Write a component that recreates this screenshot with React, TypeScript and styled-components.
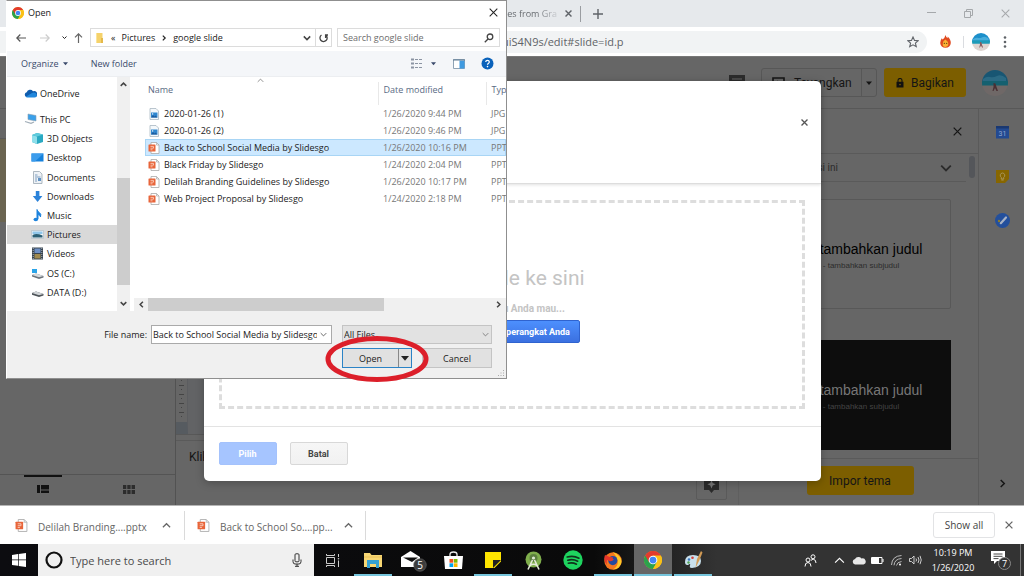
import React from 'react';
import styled, { createGlobalStyle } from 'styled-components';

const UI = '"Open Sans", "Noto Sans", sans-serif';
const PRODUCT = 'Roboto, "Liberation Sans", sans-serif';
const DOC = '"Liberation Sans", sans-serif';

const Global = createGlobalStyle`
  *, *::before, *::after { box-sizing: border-box; }
  html, body { margin: 0; padding: 0; }
  body { font-family: ${UI}; background: #fff; overflow-x: hidden; }
  button, input, select { font: inherit; color: inherit; margin: 0; }
  button { background: none; border: 0; padding: 0; cursor: pointer; }
  svg { display: block; flex: none; }
`;

const Screen = styled.div`
  position: relative;
  display: flex;
  flex-direction: column;
  min-height: 100vh;
`;

/* ---------- Browser chrome ---------- */

const TabStrip = styled.header`
  display: flex;
  align-items: center;
  height: 27px;
  background: #e6e9ec;
  color: #5f6368;
`;
const Tab = styled.div`
  display: flex;
  align-items: center;
  justify-content: flex-end;
  gap: 6px;
  width: 581px;
  height: 16px;
  padding-right: 7px;
  border-right: 1px solid #9a9da1;
  font-size: 9px;
  line-height: 16px;
`;
const TabTitle = styled.span`
  background: linear-gradient(90deg, #5f6368 60%, #c9ccd0);
  background-clip: text;
  color: transparent;
`;
const IconButton = styled.button<{ $w?: number; $h?: number }>`
  display: flex;
  align-items: center;
  justify-content: center;
  flex: none;
  width: ${(p) => p.$w ?? 16}px;
  height: ${(p) => p.$h ?? 16}px;
`;
const WindowControls = styled.div`
  display: flex;
  margin-left: auto;
  color: #a5a8ab;
`;
const UrlRow = styled.div`
  display: flex;
  align-items: center;
  height: 29px;
  padding-right: 4px;
  background: #fff;
`;
const Omnibox = styled.div`
  display: flex;
  align-items: center;
  flex: 1;
  height: 22px;
  padding-right: 6px;
  background: #f1f3f4;
  border-radius: 0 11px 11px 0;
`;
const UrlInput = styled.input`
  flex: 1;
  min-width: 0;
  height: 20px;
  padding: 0 0 0 502px;
  border: 0;
  background: transparent;
  color: #5f6368;
  font-size: 11px;
`;
const Extensions = styled.div`
  display: flex;
  align-items: center;
  color: #5f6368;
`;
const ExtensionRule = styled.span`
  width: 1px;
  height: 12px;
  margin-right: 8px;
  background: #dadce0;
`;

/* ---------- Presentation editor ---------- */

const Editor = styled.main`
  position: relative;
  display: flex;
  flex-direction: column;
  flex: 1;
  min-height: 449px;
  background: #666;
  border-top: 1px solid #777;
  font-family: ${PRODUCT};
  color: #151515;
`;
const EditorHeader = styled.div`
  display: flex;
  align-items: center;
  justify-content: flex-end;
  height: 52px;
  padding-right: 16px;
  border-bottom: 1px solid #585858;
`;
const PresentGroup = styled.div`
  display: flex;
  height: 29px;
  margin: 0 7px 0 16px;
  border: 1px solid #575757;
  border-radius: 3px;
`;
const PresentButton = styled.button`
  display: flex;
  align-items: center;
  gap: 9px;
  width: 99px;
  padding-left: 10px;
  font-size: 12px;
`;
const PresentMore = styled(IconButton)`
  height: 100%;
  border-left: 1px solid #575757;
`;
const YellowButton = styled.button<{ $w: number }>`
  display: flex;
  align-items: center;
  justify-content: center;
  gap: 7px;
  width: ${(p) => p.$w}px;
  height: 29px;
  border-radius: 3px;
  background: #7c5e00;
  font-size: 12px;
`;
const Account = styled.button`
  display: flex;
  margin-left: 16px;
`;
const Workspace = styled.div`
  display: flex;
  flex: 1;
`;
const Filmstrip = styled.aside`
  display: flex;
  flex-direction: column;
  justify-content: space-between;
  width: 176px;
  border-right: 1px solid #525252;
`;
const SelectedSlide = styled.div`
  height: 84px;
  margin-top: 29px;
  border-top: 1px solid #5a5a5a;
  background: #6a6450;
`;
const ViewTabs = styled.div`
  display: flex;
  height: 31px;
  padding-right: 3px;
  border-top: 1px solid #545454;
`;
const ViewTab = styled.button<{ $active?: boolean }>`
  display: flex;
  flex: 1;
  flex-direction: column;
  align-items: center;
  gap: 8px;
  &::before {
    content: '';
    width: 38px;
    height: 2px;
    background: ${(p) => (p.$active ? '#111' : 'transparent')};
  }
`;
const Stage = styled.section`
  display: flex;
  flex-direction: column;
  flex: 1;
`;
const Canvas = styled.div`
  display: flex;
  flex: 1;
  background: #626365;
  border-bottom: 1px solid #585858;
`;
const Ruler = styled.div`
  display: flex;
  align-items: flex-end;
  width: 12px;
  border-right: 1px solid #5c5d60;
  background: #666;
  border-bottom: 12px solid #565b60;
`;
const Notes = styled.div`
  display: flex;
  justify-content: space-between;
  height: 65px;
  padding: 0 11px 0 13px;
  border-top: 1px solid #5a5a5a;
  background: #666;
  font-size: 12px;
  line-height: 32px;
`;
const NotesHandle = styled.div`
  height: 5px;
  background: #666;
`;
const ExploreButton = styled.button`
  display: flex;
  align-items: center;
  justify-content: center;
  align-self: flex-end;
  width: 31px;
  height: 29px;
  margin-bottom: 5px;
  border: 1px solid #5a5a5a;
  border-radius: 2px;
`;
const ThemePanel = styled.aside`
  display: flex;
  flex-direction: column;
  width: 241px;
  border-left: 1px solid #5f5f5f;
  border-right: 1px solid #5a5a5a;
`;
const ThemeHeader = styled.div`
  display: flex;
  align-items: center;
  justify-content: space-between;
  height: 45px;
  padding: 0 13px 0 18px;
  border-bottom: 1px solid #5a5a5a;
  font-size: 12px;
`;
const ThemeBody = styled.div`
  display: flex;
  flex: 1;
`;
const ThemeList = styled.div`
  display: flex;
  flex-direction: column;
  flex: 1;
`;
const ThemeSection = styled.button`
  display: flex;
  align-items: center;
  justify-content: space-between;
  height: 28px;
  padding: 0 14px 0 28px;
  border-bottom: 1px solid #5a5a5a;
  font-size: 10px;
  color: #2b2b2b;
`;
const PanelScroll = styled.div`
  width: 12px;
  padding: 2px 3px;
  &::before {
    content: '';
    display: block;
    height: 22px;
    border-radius: 3px;
    background: #54565a;
  }
`;
const ThemeCard = styled.button<{ $dark?: boolean }>`
  display: flex;
  flex-direction: column;
  align-items: center;
  justify-content: center;
  gap: 3px;
  height: 110px;
  margin: ${(p) => (p.$dark ? '31px 15px 0 13px' : '17px 15px 0 13px')};
  padding: 4px 0 0 4px;
  border: 1px solid ${(p) => (p.$dark ? '#0d0d0d' : '#585858')};
  border-radius: ${(p) => (p.$dark ? 0 : 2)}px;
  background: ${(p) => (p.$dark ? '#0d0d0d' : '#666')};
  color: ${(p) => (p.$dark ? '#777' : '#000')};
  font-family: ${DOC};
  white-space: nowrap;
`;
const CardTitle = styled.span`
  font-size: 14px;
  line-height: 16px;
`;
const CardSub = styled.span<{ $dark?: boolean }>`
  font-size: 8px;
  line-height: 12px;
  color: ${(p) => (p.$dark ? '#444' : '#2c2c2c')};
`;
const ThemeFooter = styled.div`
  display: flex;
  justify-content: center;
  height: 47px;
  padding: 7px 0 0 3px;
  border-top: 1px solid #5a5a5a;
`;
const SideRail = styled.nav`
  display: flex;
  flex-direction: column;
  align-items: center;
  gap: 28px;
  width: 45px;
  padding: 15px 0 0 2px;
`;
const RailToggle = styled(IconButton)`
  margin: auto 0 14px;
`;

/* ---------- File picker modal ---------- */

const ModalLayer = styled.div`
  position: absolute;
  inset: 0;
  display: flex;
  align-items: center;
  justify-content: center;
`;
const Modal = styled.section`
  display: flex;
  flex-direction: column;
  width: 617px;
  max-width: 100%;
  height: 400px;
  background: #fff;
  border-radius: 5px;
  box-shadow: 0 2px 8px rgba(0, 0, 0, 0.25);
`;
const ModalHeader = styled.div`
  display: flex;
  justify-content: flex-end;
  height: 103px;
  padding: 33px 8px 0 0;
  border-bottom: 1px solid #ddd;
  box-shadow: 0 1px 3px rgba(0, 0, 0, 0.12);
  color: #555;
`;
const DropZone = styled.div`
  display: flex;
  flex: 1;
  flex-direction: column;
  align-items: center;
  margin: 16px 16px 17px 15px;
  padding-top: 60px;
  border: 3px dashed #ddd;
  color: #c4c4c4;
`;
const DropTitle = styled.p`
  margin: 0;
  font-size: 21px;
  line-height: 30px;
`;
const DropHint = styled.p`
  margin: 9px 0 4px;
  font-size: 10px;
  line-height: 14px;
  font-weight: 700;
`;
const PickerButton = styled.button<{ $kind: 'primary' | 'disabled' | 'plain' }>`
  height: 23px;
  min-width: 58px;
  padding: 0 9px;
  border: 1px solid
    ${(p) => (p.$kind === 'primary' ? '#2f63cf' : p.$kind === 'disabled' ? '#a4c2fc' : '#d8d8d8')};
  border-radius: 2px;
  background: ${(p) =>
    p.$kind === 'primary'
      ? 'linear-gradient(#4d90fe, #3b70e0)'
      : p.$kind === 'disabled'
        ? '#a6c5ff'
        : 'linear-gradient(#f6f6f6, #f1f1f1)'};
  color: ${(p) => (p.$kind === 'plain' ? '#444' : '#fff')};
  font-size: 9px;
  font-weight: 700;
`;
const ModalFooter = styled.div`
  display: flex;
  gap: 13px;
  height: 55px;
  padding: 15px 15px 0;
  border-top: 1px solid #e3e3e3;
`;

/* ---------- Open file window ---------- */

const FileWindow = styled.section`
  position: absolute;
  left: 6px;
  top: 0;
  display: flex;
  flex-direction: column;
  width: 501px;
  height: 379px;
  border: 1px solid #8f8f8f;
  border-left-color: #fff;
  background: #fff;
  font-size: 9px;
  color: #222;
`;
const TitleBar = styled.div`
  display: flex;
  align-items: center;
  gap: 4px;
  height: 23px;
  padding: 0 5px;
`;
const TitleText = styled.h1`
  flex: 1;
  margin: 0;
  font-size: inherit;
  font-weight: 400;
`;
const NavBar = styled.div`
  display: flex;
  align-items: center;
  height: 27px;
  padding: 0 6px;
`;
const AddressBar = styled.div`
  display: flex;
  align-items: center;
  gap: 6px;
  flex: 1;
  height: 19px;
  margin: 0 5px 0 1px;
  padding-left: 3px;
  border: 1px solid #dcdcdc;
`;
const RefreshCell = styled.div`
  display: flex;
  align-items: center;
  height: 100%;
  margin-left: auto;
  color: #444;
`;
const RefreshButton = styled(IconButton)`
  height: 100%;
  border-left: 1px solid #dcdcdc;
`;
const SearchBox = styled.label`
  display: flex;
  align-items: center;
  width: 163px;
  height: 19px;
  padding: 0 5px 0 5px;
  border: 1px solid #dcdcdc;
  color: #444;
`;
const SearchInput = styled.input`
  flex: 1;
  min-width: 0;
  padding: 0;
  border: 0;
  outline: 0;
  background: transparent;
  font-size: 9px;
  &::placeholder {
    color: #6d6d6d;
    opacity: 1;
  }
`;
const CommandBar = styled.div`
  display: flex;
  align-items: center;
  height: 26px;
  padding: 0 9px 0 14px;
  background: #f4f6f9;
  border-bottom: 1px solid #eceef1;
  color: #3a4a6b;
`;
const Command = styled.button`
  display: flex;
  align-items: center;
  gap: 4px;
  margin-right: 23px;
`;
const CommandIcons = styled.div`
  display: flex;
  align-items: center;
  margin-left: auto;
`;
const Browser = styled.div`
  display: flex;
  height: 234px;
`;
const Tree = styled.nav`
  display: flex;
  flex-direction: column;
  width: 110px;
  padding-top: 7px;
`;
const TreeItem = styled.a<{ $root?: boolean; $selected?: boolean }>`
  display: flex;
  align-items: center;
  gap: 3px;
  height: 19px;
  padding-left: ${(p) => (p.$root ? 17 : 24)}px;
  margin-bottom: ${(p) => (p.$root ? 7 : 0)}px;
  background: ${(p) => (p.$selected ? '#d9d9d9' : 'transparent')};
  color: inherit;
  text-decoration: none;
  & + & {
    margin-bottom: 0;
  }
`;
const TreeGroup = styled.div`
  display: flex;
  flex-direction: column;
  height: 173px;
  & > a {
    flex: 1;
  }
`;
const VScroll = styled.div`
  display: flex;
  flex-direction: column;
  align-items: center;
  width: 13px;
  padding: 4px 0;
  background: #f0f0f0;
  color: #444;
`;
const VThumb = styled.div`
  width: 13px;
  height: 107px;
  margin: auto 0 15px;
  background: #cdcdcd;
`;
const FilePane = styled.div`
  display: flex;
  flex-direction: column;
  flex: 1;
  min-width: 0;
  margin-left: 4px;
  overflow: hidden;
`;
const SortMark = styled.div`
  display: flex;
  height: 5px;
  padding-left: 123px;
  color: #777;
`;
const FileTable = styled.table`
  width: 361px;
  margin-left: 11px;
  border-collapse: collapse;
  table-layout: fixed;
  white-space: nowrap;
`;
const HeadCell = styled.th<{ $w?: number }>`
  width: ${(p) => (p.$w ? `${p.$w}px` : 'auto')};
  height: 23px;
  padding: 0 0 7px ${(p) => (p.$w === 233 ? 3 : 5)}px;
  border-right: 1px solid #e8e8e8;
  color: #5a6b85;
  font-size: 9px;
  font-weight: 400;
  line-height: 16px;
  text-align: left;
  &:last-child {
    border: 0;
  }
`;
const FileRow = styled.tr<{ $selected?: boolean }>`
  background: ${(p) => (p.$selected ? '#cce8ff' : 'transparent')};
  box-shadow: ${(p) => (p.$selected ? 'inset 0 0 0 1px #a8d5f5' : 'none')};
`;
const FileCell = styled.td<{ $name?: boolean }>`
  height: 17px;
  padding: 0 0 0 ${(p) => (p.$name ? 3 : 5)}px;
  color: ${(p) => (p.$name ? '#222' : '#777')};
  font-size: 9px;
  line-height: 17px;
`;
const FileName = styled.span`
  display: flex;
  align-items: center;
  gap: 4px;
`;
const HScroll = styled.div`
  display: flex;
  align-items: center;
  height: 13px;
  margin-top: auto;
  padding: 0 4px;
  background: #f0f0f0;
  color: #444;
`;
const HThumb = styled.div`
  width: 236px;
  height: 13px;
  margin: 0 auto 0 3px;
  background: #cdcdcd;
`;
const OpenForm = styled.form`
  position: relative;
  display: flex;
  flex-direction: column;
  flex: 1;
  gap: 4px;
  padding: 14px 14px 0 0;
  background: #f0f0f0;
`;
const FormRow = styled.div`
  display: flex;
  align-items: center;
  justify-content: flex-end;
  gap: 10px;
`;
const FieldLabel = styled.label`
  margin-right: -6px;
`;
const NameBox = styled.div`
  display: flex;
  align-items: center;
  width: 181px;
  height: 19px;
  padding-right: 2px;
  border: 1px solid #aaa;
  background: #fff;
  color: #555;
`;
const NameInput = styled.input`
  flex: 1;
  min-width: 0;
  padding: 0 0 0 1px;
  border: 0;
  background: transparent;
  color: #222;
  font-size: 9px;
`;
const TypeBox = styled.div`
  display: grid;
  align-items: center;
  width: 150px;
  height: 19px;
  color: #777;
  & > * {
    grid-area: 1 / 1;
  }
  & > svg {
    justify-self: end;
    margin-right: 3px;
    pointer-events: none;
  }
`;
const TypeSelect = styled.select`
  width: 100%;
  height: 19px;
  padding: 0 1px;
  appearance: none;
  border: 1px solid #c4c4c4;
  border-radius: 0;
  background: #e2e2e2;
  color: #222;
`;
const SplitButton = styled.div`
  display: flex;
  width: 70px;
  height: 20px;
  border: 1px solid #2b83c6;
  background: #e1e1e1;
`;
const OpenButton = styled.button`
  flex: 1;
`;
const OpenMore = styled.button`
  display: flex;
  align-items: center;
  justify-content: center;
  width: 13px;
  border-left: 1px solid #888;
`;
const CancelButton = styled.button`
  width: 70px;
  height: 20px;
  border: 1px solid #c4c4c4;
  background: #e1e1e1;
`;
const Grip = styled.svg`
  position: absolute;
  right: 1px;
  bottom: 1px;
`;
const Highlight = styled.svg`
  position: absolute;
  left: 324px;
  top: 334px;
  pointer-events: none;
`;

/* ---------- Downloads shelf ---------- */

const Shelf = styled.div`
  display: flex;
  align-items: center;
  height: 39px;
  padding-right: 7px;
  border-top: 1px solid #b5b5b5;
  background: #fff;
  color: #666;
`;
const Download = styled.div`
  display: flex;
  align-items: center;
  gap: 10px;
  width: 181px;
  height: 29px;
  padding: 0 12px 0 12px;
  border-right: 1px solid #dadada;
  font-size: 10px;
  &:first-child {
    width: 185px;
    padding-left: 15px;
  }
`;
const DownloadName = styled.span`
  flex: 1;
  padding-top: 3px;
  white-space: nowrap;
`;
const ShowAll = styled.button`
  width: 62px;
  height: 26px;
  margin: 0 6px 0 auto;
  border: 1px solid #e2e3e5;
  border-radius: 3px;
  color: #444;
  font-size: 10px;
`;

/* ---------- Taskbar ---------- */

const Taskbar = styled.footer`
  display: flex;
  height: 32px;
  background: linear-gradient(90deg, #0c0c10, #0a0a0a 58%, #333 70%, #333);
  color: #fff;
`;
const StartButton = styled(IconButton)`
  width: 38px;
  height: 32px;
`;
const TaskSearch = styled.label`
  display: flex;
  align-items: center;
  gap: 7px;
  width: 276px;
  padding: 0 12px 0 7px;
  background: #f0f0f0;
  color: #444;
`;
const TaskSearchInput = styled(SearchInput)`
  font-size: 11px;
  &::placeholder {
    color: #4a4a4a;
  }
`;
const TaskButton = styled.button<{ $open?: boolean; $active?: boolean }>`
  display: flex;
  align-items: center;
  justify-content: center;
  width: 38px;
  height: 32px;
  margin: 0 1px;
  background: ${(p) => (p.$active ? '#666' : 'transparent')};
  box-shadow: ${(p) => (p.$open ? 'inset 0 -2px 0 #76c5dc' : 'none')};
`;
const TaskGroup = styled.div`
  display: flex;
  margin-left: -1px;
`;
const Tray = styled.div`
  display: flex;
  align-items: center;
  margin-left: auto;
  padding-right: 3px;
`;
const Clock = styled.time`
  width: 56px;
  margin: 0 10px 0 0;
  font-size: 9px;
  line-height: 15px;
  text-align: center;
`;
const TrayButton = styled(IconButton)`
  width: ${(p) => p.$w ?? 19}px;
`;
const TrayEdge = styled.span`
  width: 1px;
  height: 32px;
  margin-left: 9px;
  background: #777;
`;

/* ---------- Drawings ---------- */

const Cross = ({ s = 8, w = 1.2 }: { s?: number; w?: number }) => (
  <svg width={s} height={s} viewBox="0 0 8 8" fill="none" stroke="currentColor" strokeWidth={w}>
    <path d="M.6.6l6.8 6.8M7.4.6L.6 7.4" />
  </svg>
);
const turns = { down: 0, left: 90, up: 180, right: 270 };
const Chevron = ({ dir = 'down', s = 8, w = 1.3 }: { dir?: keyof typeof turns; s?: number; w?: number }) => (
  <svg width={s} height={s} viewBox="0 0 8 8" fill="none" stroke="currentColor" strokeWidth={w}>
    <path d="M.8 2.4L4 5.6l3.2-3.2" transform={`rotate(${turns[dir]} 4 4)`} />
  </svg>
);
const Caret = ({ s = 6 }: { s?: number }) => (
  <svg width={s} height={s} viewBox="0 0 6 6" fill="currentColor">
    <path d="M0 1.500h6L3 5z" />
  </svg>
);
const ChromeLogo = ({ s }: { s: number }) => (
  <svg width={s} height={s} viewBox="0 0 24 24">
    <circle cx="12" cy="12" r="12" fill="#fbc116" />
    <path d="M1.600 6A12 12 0 0 0 12 24l5.200-9z" fill="#2ba24c" />
    <path d="M12 6h10.400A12 12 0 0 1 12 24l5.200-9z" fill="#fbc116" />
    <path d="M1.600 6A12 12 0 0 1 22.400 6H12L6.800 15z" fill="#e33b2e" />
    <circle cx="12" cy="12" r="5.800" fill="#fff" />
    <circle cx="12" cy="12" r="4.500" fill="#4285f4" />
  </svg>
);
const BeachPhoto = ({ s, dim }: { s: number; dim?: boolean }) => (
  <svg width={s} height={s} viewBox="0 0 26 26">
    <defs>
      <clipPath id={`round${s}`}>
        <circle cx="13" cy="13" r="13" />
      </clipPath>
    </defs>
    <g clipPath={`url(#round${s})`}>
      <path d="M0 0h26v13H0z" fill={dim ? '#185673' : '#1c8fca'} />
      <path d="M1 9q4-3 7-2t7-1 9 2v3H1z" fill={dim ? '#2b6a84' : '#48addb'} />
      <path d="M0 11h26v5H0z" fill={dim ? '#15606f' : '#1e9bb8'} />
      <path d="M0 15.500h26v11H0z" fill={dim ? '#6f6867' : '#ded5d1'} />
      <path d="M11.500 13l2 .5 1 3.500 1.500 4h-1.500l-1.500-3-1.500 3h-1l1-4z" fill={dim ? '#4a3034' : '#8a5a5c'} />
    </g>
  </svg>
);
const PptIcon = ({ s = 12 }: { s?: number }) => (
  <svg width={s} height={s} viewBox="0 0 12 12">
    <path d="M3 .5h5.500L11 3v8.500H3z" fill="#fff" stroke="#aaa" strokeWidth=".8" />
    <path d="M8.500.5V3H11" fill="none" stroke="#aaa" strokeWidth=".7" />
    <rect x=".5" y="2.500" width="7" height="7" rx=".6" fill="#e8653a" />
    <path d="M2.500 4.400h3v1.800h-3M2.500 7.800h2" fill="none" stroke="#fbd5c6" strokeWidth=".8" />
  </svg>
);
const JpgIcon = () => (
  <svg width="12" height="12" viewBox="0 0 12 12">
    <path d="M2 .5h6L10.500 3v8.500H2z" fill="#f4f8fb" stroke="#a9b7c2" strokeWidth=".8" />
    <path d="M3 4.500h6.500v5H3z" fill="#2f86cf" />
    <path d="M3 9.500l2-2.500 1.500 1.500 1-1 2 2z" fill="#1d5a9c" />
    <circle cx="4.600" cy="5.900" r=".7" fill="#fff" />
  </svg>
);
const FolderIcon = () => (
  <svg width="11" height="12" viewBox="0 0 11 12">
    <path d="M2 1h6.500v10H2z" fill="#f5d26b" />
    <path d="M7 6h2v5H7z" fill="#e5b94a" />
    <path d="M2 1h1v10H2z" fill="#fbe49a" />
  </svg>
);

const treeArt: Record<string, React.ReactNode> = {
  OneDrive: (
    <>
      <path d="M2.500 10A2.500 2.500 0 0 1 2.700 5.200 3.600 3.600 0 0 1 9 4.300 3 3 0 0 1 11.500 10z" fill="#0f5cad" />
      <path d="M1.800 9.700L8 6a3 3 0 0 1 4.500 3.600Q12 10.500 10.500 10.500H3Q2.200 10.500 1.800 9.700z" fill="#2187dc" />
    </>
  ),
  'This PC': (
    <>
      <path d="M4 1l8 1.500V8L4 6.500z" fill="#3aa0ea" stroke="#8c9fb0" strokeWidth=".6" />
      <path d="M1 8.500l6 1.800L10 9" fill="none" stroke="#a3afb9" strokeWidth="1.300" />
    </>
  ),
  '3D Objects': (
    <>
      <path d="M1 3l5-2 6 1.500V10l-6 2-5-2z" fill="#2aa9c2" />
      <path d="M1 3l5 1.500V12l-5-2z" fill="#8fdfeb" />
      <path d="M1 3l5-2 6 1.500L6 4.500z" fill="#5fcbdc" />
    </>
  ),
  Desktop: (
    <>
      <path d="M.5 2.500h12v8H.5z" fill="#1581dc" />
      <path d="M.5 2.500h12L4 10.500H.5z" fill="#3b9cec" />
    </>
  ),
  Documents: (
    <>
      <path d="M2.500.5h6L11 3v9.500H2.500z" fill="#eef2f6" stroke="#9aa7b3" strokeWidth=".8" />
      <path d="M4 4h2.500M4 6h5.500M4 8h2M4 10h2" stroke="#7e9ec0" />
      <path d="M7 7h3v3H7z" fill="#5f92c4" />
    </>
  ),
  Downloads: <path d="M4.800 1h3.600v5h3L6.600 12 1.800 6h3z" fill="#2b82d9" />,
  Music: (
    <>
      <path d="M6 .5q.5 2 2.500 3.200T9.500 8q0-2-2.500-2.500V10H6z" fill="#1d83dd" stroke="#1d83dd" />
      <ellipse cx="4.800" cy="10.500" rx="2.300" ry="1.800" fill="#1d83dd" />
    </>
  ),
  Pictures: (
    <>
      <path d="M.5 2.500h12v8H.5z" fill="#eff4f8" stroke="#b0bec9" strokeWidth=".7" />
      <path d="M1.500 3.500h10V6h-10z" fill="#8fc6ea" />
      <path d="M1.500 9.500V7q4-2 10 .5v2z" fill="#2a6076" />
    </>
  ),
  Videos: (
    <>
      <path d="M1 .5h11v12H1z" fill="#39444f" />
      <path d="M3.500 1.500h6v4.500h-6z" fill="#6d8fc4" />
      <path d="M3.500 7h6v4.500h-6z" fill="#a18a4e" />
      <path d="M2.200 1v11M10.800 1v11" stroke="#c8d0d8" strokeWidth=".8" strokeDasharray="1 1" />
    </>
  ),
  'OS (C:)': (
    <>
      <path d="M1 2h5v4H1z" fill="#2aa4e8" />
      <path d="M1 8l4-1.500L12.500 9v1.500L8 12 1 9.500z" fill="#6b7279" />
      <path d="M1 8l4-1.500L12.500 9 8 10.300z" fill="#d5d9dc" />
    </>
  ),
  'DATA (D:)': (
    <>
      <path d="M1 7l4-1.500L12.500 8v1.500L8 11 1 8.800z" fill="#4d5358" />
      <path d="M1 7l4-1.500L12.500 8 8 9.300z" fill="#d0d4d7" />
    </>
  ),
};
const TreeArt = ({ name }: { name: string }) => (
  <svg width="13" height="13" viewBox="0 0 13 13">
    {treeArt[name]}
  </svg>
);

/* ---------- Data ---------- */

const roots = ['OneDrive', 'This PC'];
const places = ['3D Objects', 'Desktop', 'Documents', 'Downloads', 'Music', 'Pictures', 'Videos', 'OS (C:)', 'DATA (D:)'];
const files = [
  { name: '2020-01-26 (1)', date: '1/26/2020 9:44 PM', type: 'JPG' },
  { name: '2020-01-26 (2)', date: '1/26/2020 9:46 PM', type: 'JPG' },
  { name: 'Back to School Social Media by Slidesgo', date: '1/26/2020 10:16 PM', type: 'PPT' },
  { name: 'Black Friday by Slidesgo', date: '1/24/2020 2:04 PM', type: 'PPT' },
  { name: 'Delilah Branding Guidelines by Slidesgo', date: '1/26/2020 10:17 PM', type: 'PPT' },
  { name: 'Web Project Proposal by Slidesgo', date: '1/24/2020 2:18 PM', type: 'PPT' },
];

/* ---------- Sections ---------- */

const BrowserTop = () => (
  <>
    <TabStrip>
      <Tab>
        <TabTitle>tes from Gra</TabTitle>
        <IconButton $w={10} aria-label="Close tab"><Cross s={7} w={1.6} /></IconButton>
      </Tab>
      <IconButton $w={34} aria-label="New tab">
        <svg width="10" height="10" viewBox="0 0 10 10" stroke="currentColor" strokeWidth="1.400">
          <path d="M5 0v10M0 5h10" />
        </svg>
      </IconButton>
      <WindowControls>
        <IconButton $w={37} aria-label="Minimize">
          <svg width="9" height="9" viewBox="0 0 9 9" stroke="currentColor"><path d="M0 3.500h9" /></svg>
        </IconButton>
        <IconButton $w={37} aria-label="Restore">
          <svg width="9" height="9" viewBox="0 0 9 9" fill="none" stroke="currentColor">
            <path d="M.5 2.500h6v6h-6zM2.500 2.500v-2h6v6h-2" />
          </svg>
        </IconButton>
        <IconButton $w={37} aria-label="Close window"><Cross s={9} w={0.9} /></IconButton>
      </WindowControls>
    </TabStrip>
    <UrlRow>
      <Omnibox>
        <UrlInput aria-label="Address" defaultValue="uiS4N9s/edit#slide=id.p" />
        <IconButton aria-label="Bookmark">
          <svg width="12" height="12" viewBox="0 0 12 12" fill="none" stroke="#5f6368" strokeWidth="1.100">
            <path d="M6 1l1.500 3.400 3.700.3-2.800 2.400.9 3.600L6 8.800l-3.300 1.900.9-3.600L.8 4.700l3.700-.3z" />
          </svg>
        </IconButton>
      </Omnibox>
      <Extensions>
        <IconButton $w={36} aria-label="Flame extension">
          <svg width="11" height="13" viewBox="0 0 11 13">
            <path d="M5.500 0q.4 2 2 3.200.3-1 .1-1.800Q11 4.500 10.800 8q-.5 4.800-5.300 4.800T.2 8Q.1 5.200 2 3q0 1 .6 1.600Q4.800 3 5.500 0z" fill="#e04a1f" />
            <path d="M5.500 4.500q2.800 2 2.800 4.600T5.500 12 2.700 9.100t2.800-4.600z" fill="#f9b233" />
            <circle cx="4.300" cy="8.300" r=".6" fill="#4a2a10" />
            <circle cx="6.700" cy="8.300" r=".6" fill="#4a2a10" />
          </svg>
        </IconButton>
        <ExtensionRule />
        <IconButton $w={18} $h={18} aria-label="Profile"><BeachPhoto s={18} /></IconButton>
        <IconButton $w={30} aria-label="Menu">
          <svg width="4" height="12" viewBox="0 0 4 12" fill="currentColor">
            <circle cx="2" cy="1.500" r="1.300" /><circle cx="2" cy="6" r="1.300" /><circle cx="2" cy="10.500" r="1.300" />
          </svg>
        </IconButton>
      </Extensions>
    </UrlRow>
  </>
);

const EditorView = () => (
  <>
    <EditorHeader>
      <IconButton aria-label="Comments">
        <svg width="16" height="16" viewBox="0 0 16 16"><path d="M0 0h16v16l-3-3H0z" fill="#2c2c2c" /><path d="M3 4h10M3 6.500h10M3 9h10" stroke="#666" /></svg>
      </IconButton>
      <PresentGroup>
        <PresentButton>
          <svg width="13" height="11" viewBox="0 0 13 11" fill="none" stroke="currentColor" strokeWidth="1.600">
            <path d="M1 1h11v9H1z" /><path d="M5 3.500l3.500 2L5 7.500z" fill="currentColor" stroke="none" />
          </svg>
          Tayangkan
        </PresentButton>
        <PresentMore $w={15} aria-label="Present options"><Caret /></PresentMore>
      </PresentGroup>
      <YellowButton $w={82}>
        <svg width="8" height="10" viewBox="0 0 8 10">
          <path d="M2 4V2.500a2 2 0 0 1 4 0V4" fill="none" stroke="#111" strokeWidth="1.100" />
          <path d="M.5 3.800h7V9.500h-7z" fill="#111" /><circle cx="4" cy="6.600" r=".8" fill="#7c5e00" />
        </svg>
        Bagikan
      </YellowButton>
      <Account aria-label="Account"><BeachPhoto s={26} dim /></Account>
    </EditorHeader>
    <Workspace>
      <Filmstrip>
        <SelectedSlide />
        <ViewTabs>
          <ViewTab $active aria-label="Filmstrip view">
            <svg width="12" height="8" viewBox="0 0 12 8" fill="#111"><path d="M0 0h3v8H0zM4 0h8v4.500H4zM4 5.500h8V8H4z" /></svg>
          </ViewTab>
          <ViewTab aria-label="Grid view">
            <svg width="12" height="9" viewBox="0 0 12 9" fill="#2c2c2c"><path d="M0 0h3.300v4H0zM4.300 0h3.300v4H4.300zM8.600 0H12v4H8.600zM0 5h3.300v4H0zM4.300 5h3.300v4H4.300zM8.600 5H12v4H8.600z" /></svg>
          </ViewTab>
        </ViewTabs>
      </Filmstrip>
      <Stage>
        <Canvas>
          <Ruler>
            <svg width="11" height="48" viewBox="0 0 11 48" stroke="#444">
              <path d="M3 2.500h5M5 6.500h1M3 11.500h5M5 15.500h1M3 20.500h5M5 24.500h1M3 29.500h5M5 33.500h1M3 38.500h5M5 42.500h1" />
            </svg>
          </Ruler>
        </Canvas>
        <NotesHandle />
        <Notes>
          Klik
          <ExploreButton aria-label="Explore">
            <svg width="15" height="15" viewBox="0 0 15 15">
              <path d="M0 0h15v12h-5l-2.500 3L5 12H0z" fill="#2b2b2b" />
              <path d="M7.500 2l1.200 3 3 1.200-3 1.200-1.200 3-1.200-3-3-1.200 3-1.200z" fill="#777" />
            </svg>
          </ExploreButton>
        </Notes>
      </Stage>
      <ThemePanel>
        <ThemeHeader>
          Tema
          <IconButton aria-label="Close themes"><Cross s={9} w={1.1} /></IconButton>
        </ThemeHeader>
        <ThemeBody>
          <ThemeList>
            <ThemeSection>
              <span>Di presentasi ini</span>
              <Chevron s={12} w={1.2} />
            </ThemeSection>
            <ThemeCard>
              <CardTitle>Klik - tambahkan judul</CardTitle>
              <CardSub>Klik - tambahkan subjudul</CardSub>
            </ThemeCard>
            <ThemeCard $dark>
              <CardTitle>Klik - tambahkan judul</CardTitle>
              <CardSub $dark>Klik - tambahkan subjudul</CardSub>
            </ThemeCard>
          </ThemeList>
          <PanelScroll />
        </ThemeBody>
        <ThemeFooter>
          <YellowButton $w={107}>Impor tema</YellowButton>
        </ThemeFooter>
      </ThemePanel>
      <SideRail>
        <IconButton aria-label="Calendar">
          <svg width="13" height="13" viewBox="0 0 13 13">
            <path d="M0 1h13v11.500H0z" fill="#234a91" /><path d="M0 0h13v2.500H0z" fill="#1a3871" />
            <text x="6.500" y="9.800" textAnchor="middle" fontSize="7" fill="#93a8d0">31</text>
          </svg>
        </IconButton>
        <IconButton aria-label="Keep">
          <svg width="13" height="13" viewBox="0 0 13 13">
            <path d="M0 0h13v9l-4 4H0z" fill="#876600" />
            <path d="M6.500 3a2.400 2.400 0 0 1 1.200 4.400V9H5.300V7.400A2.400 2.400 0 0 1 6.500 3zM5.300 10h2.400" fill="none" stroke="#a99860" strokeWidth=".9" />
          </svg>
        </IconButton>
        <IconButton aria-label="Tasks">
          <svg width="15" height="15" viewBox="0 0 15 15">
            <circle cx="7.500" cy="7.500" r="7.500" fill="#234f9c" />
            <path d="M5.800 10.200L11 4.500" stroke="#a8b3c6" strokeWidth="2.200" strokeLinecap="round" /><circle cx="4" cy="8" r="1.200" fill="#8c7a2c" />
          </svg>
        </IconButton>
        <RailToggle aria-label="Hide side panel"><Chevron dir="right" s={9} w={1.3} /></RailToggle>
      </SideRail>
    </Workspace>
  </>
);

const PickerModal = () => (
  <ModalLayer>
    <Modal role="dialog" aria-label="File picker">
      <ModalHeader>
        <IconButton aria-label="Close"><Cross s={7} w={1.5} /></IconButton>
      </ModalHeader>
      <DropZone>
        <DropTitle>Seret file ke sini</DropTitle>
        <DropHint>Atau, kalau Anda mau...</DropHint>
        <PickerButton $kind="primary">Pilih file dari perangkat Anda</PickerButton>
      </DropZone>
      <ModalFooter>
        <PickerButton $kind="disabled">Pilih</PickerButton>
        <PickerButton $kind="plain">Batal</PickerButton>
      </ModalFooter>
    </Modal>
  </ModalLayer>
);

const OpenWindow = () => (
  <FileWindow role="dialog" aria-labelledby="open-title">
    <TitleBar>
      <ChromeLogo s={12} />
      <TitleText id="open-title">Open</TitleText>
      <IconButton aria-label="Close dialog"><Cross s={9} w={0.9} /></IconButton>
    </TitleBar>
    <NavBar>
      <IconButton aria-label="Back">
        <svg width="10" height="8" viewBox="0 0 10 8" fill="none" stroke="#555" strokeWidth="1.200"><path d="M10 4H.8M4.300.5L.8 4l3.500 3.500" /></svg>
      </IconButton>
      <IconButton $w={32} aria-label="Forward">
        <svg width="10" height="8" viewBox="0 0 10 8" fill="none" stroke="#ccc" strokeWidth="1.200"><path d="M0 4h9.200M5.700.5L9.200 4 5.700 7.500" /></svg>
      </IconButton>
      <IconButton $w={7} aria-label="Recent locations"><Chevron s={5} w={1.6} /></IconButton>
      <IconButton aria-label="Up" $w={21}>
        <svg width="9" height="10" viewBox="0 0 9 10" fill="none" stroke="#666" strokeWidth="1.200"><path d="M4.500 10V.8M1 4.300L4.500.8 8 4.300" /></svg>
      </IconButton>
      <AddressBar>
        <FolderIcon />
        <span>«</span>
        <span>Pictures</span>
        <Chevron dir="right" s={6} w={1.6} />
        <span>google slide</span>
        <RefreshCell>
          <IconButton aria-label="Previous locations"><Chevron s={8} w={1.5} /></IconButton>
          <RefreshButton aria-label="Refresh">
            <svg width="9" height="10" viewBox="0 0 9 10" fill="none" stroke="currentColor" strokeWidth="1.300">
              <path d="M2.500 2A3.600 3.600 0 1 0 7 2.300M6.600 5V2h2.400" />
            </svg>
          </RefreshButton>
        </RefreshCell>
      </AddressBar>
      <SearchBox>
        <SearchInput type="search" aria-label="Search google slide" placeholder="Search google slide" />
        <svg width="10" height="10" viewBox="0 0 10 10" fill="none" stroke="currentColor" strokeWidth="1.300">
          <circle cx="6" cy="3.800" r="2.800" /><path d="M4 6L.8 9.300" />
        </svg>
      </SearchBox>
    </NavBar>
    <CommandBar>
      <Command>Organize <Caret s={5} /></Command>
      <Command>New folder</Command>
      <CommandIcons>
        <IconButton aria-label="Change view">
          <svg width="12" height="11" viewBox="0 0 12 11" stroke="#8b94a3"><path d="M0 1.500h3M0 5.500h3M0 9.500h3" strokeWidth="2" /><path d="M4 1.500h8M4 5.500h8M4 9.500h8" strokeDasharray="3 1" /></svg>
        </IconButton>
        <IconButton aria-label="More views"><Caret s={5} /></IconButton>
        <IconButton aria-label="Preview pane" $w={36}>
          <svg width="12" height="10" viewBox="0 0 12 10"><path d="M.5.5h11v9H.5z" fill="#fff" stroke="#8fa3b5" /><path d="M6.500 1.500h5v8h-5z" fill="#3f9ae0" /><path d="M0 1h12" stroke="#5f7a92" /></svg>
        </IconButton>
        <IconButton aria-label="Help" $w={20}>
          <svg width="13" height="13" viewBox="0 0 13 13">
            <circle cx="6.500" cy="6.500" r="6" fill="#0a62bb" />
            <path d="M4.700 5q.1-1.700 1.800-1.700T8.300 4.900Q8.300 5.800 7.300 6.400 6.500 6.900 6.500 7.800" fill="none" stroke="#fff" strokeWidth="1.200" />
            <circle cx="6.500" cy="9.600" r=".8" fill="#fff" />
          </svg>
        </IconButton>
      </CommandIcons>
    </CommandBar>
    <Browser>
      <Tree aria-label="Folders">
        {roots.map((name) => (
          <TreeItem key={name} href="#" $root><TreeArt name={name} />{name}</TreeItem>
        ))}
        <TreeGroup>
          {places.map((name) => (
            <TreeItem key={name} href="#" $selected={name === 'Pictures'}><TreeArt name={name} />{name}</TreeItem>
          ))}
        </TreeGroup>
      </Tree>
      <VScroll><Chevron dir="up" s={7} w={1.7} /><VThumb /><Chevron s={7} w={1.7} /></VScroll>
      <FilePane>
        <SortMark><Chevron dir="up" s={7} w={0.9} /></SortMark>
        <FileTable>
          <thead>
            <tr><HeadCell $w={233}>Name</HeadCell><HeadCell $w={108}>Date modified</HeadCell><HeadCell>Typ</HeadCell></tr>
          </thead>
          <tbody>
            {files.map((f) => (
              <FileRow key={f.name} $selected={f.name.startsWith('Back')}>
                <FileCell $name><FileName>{f.type === 'JPG' ? <JpgIcon /> : <PptIcon />}{f.name}</FileName></FileCell>
                <FileCell>{f.date}</FileCell>
                <FileCell>{f.type}</FileCell>
              </FileRow>
            ))}
          </tbody>
        </FileTable>
        <HScroll><Chevron dir="left" s={7} w={1.7} /><HThumb /><Chevron dir="right" s={7} w={1.7} /></HScroll>
      </FilePane>
    </Browser>
    <OpenForm onSubmit={(e) => e.preventDefault()}>
      <FormRow>
        <FieldLabel htmlFor="file-name">File name:</FieldLabel>
        <NameBox>
          <NameInput id="file-name" defaultValue="Back to School Social Media by Slidesgo" />
          <IconButton type="button" $w={12} aria-label="Recent files"><Chevron s={7} w={1} /></IconButton>
        </NameBox>
        <TypeBox>
          <TypeSelect aria-label="File type"><option>All Files</option></TypeSelect>
          <Chevron s={7} w={1} />
        </TypeBox>
      </FormRow>
      <FormRow>
        <SplitButton>
          <OpenButton>Open</OpenButton>
          <OpenMore type="button" aria-label="Open options"><Caret s={8} /></OpenMore>
        </SplitButton>
        <CancelButton type="button">Cancel</CancelButton>
      </FormRow>
      <Grip width="7" height="7" viewBox="0 0 7 7" fill="#aaa">
        <path d="M5 0h1v1H5zM5 2.500h1v1H5zM2.500 2.500h1v1h-1zM0 5h1v1H0zM2.500 5h1v1h-1zM5 5h1v1H5z" />
      </Grip>
    </OpenForm>
  </FileWindow>
);

const DownloadShelf = () => (
  <Shelf>
    <Download>
      <PptIcon s={13} /><DownloadName>Delilah Branding....pptx</DownloadName>
      <IconButton $w={12} aria-label="Download options"><Chevron dir="up" s={9} w={1.1} /></IconButton>
    </Download>
    <Download>
      <PptIcon s={13} /><DownloadName>Back to School So....pp...</DownloadName>
      <IconButton $w={12} aria-label="Download options"><Chevron dir="up" s={9} w={1.1} /></IconButton>
    </Download>
    <ShowAll>Show all</ShowAll>
    <IconButton aria-label="Close downloads"><Cross s={8} w={1.3} /></IconButton>
  </Shelf>
);

const TaskBar = () => (
  <Taskbar>
    <StartButton aria-label="Start">
      <svg width="14" height="14" viewBox="0 0 14 14" fill="#fff"><path d="M0 2l6-.9v5.500H0zM6.700 1L14 0v6.600H6.700zM0 7.300h6v5.500L0 12zM6.700 7.300H14V14l-7.300-1z" /></svg>
    </StartButton>
    <TaskSearch>
      <svg width="18" height="18" viewBox="0 0 18 18"><circle cx="9" cy="9" r="7.500" fill="none" stroke="#111" strokeWidth="2.200" /></svg>
      <TaskSearchInput aria-label="Search" placeholder="Type here to search" />
      <svg width="10" height="14" viewBox="0 0 10 14" fill="none" stroke="#333"><rect x="3" y=".8" width="4" height="8" rx="1" /><path d="M1 6.500v2Q1 11 3 11h4q2 0 2-2.500v-2M5 11v2.500M3 13.300h4" /></svg>
    </TaskSearch>
    <TaskGroup>
      <TaskButton aria-label="Task view">
        <svg width="14" height="13" viewBox="0 0 14 13" fill="none" stroke="#ccc"><path d="M.5 3.500h8v6h-8zM.5 0v1.500h8V0M.5 13v-1.500h8V13M12.500 0v3M12.500 6.500V13" /><circle cx="12.500" cy="4.800" r=".8" fill="#ccc" stroke="none" /></svg>
      </TaskButton>
      <TaskButton $open aria-label="File Explorer">
        <svg width="18" height="15" viewBox="0 0 18 15"><path d="M0 0h6l1.500 2H18v12H0z" fill="#f7d774" /><path d="M0 3h18v2H0z" fill="#f0cb66" /><path d="M3 7h12v8h-3v-4H6v4H3z" fill="#35a2d4" /></svg>
      </TaskButton>
      <TaskButton aria-label="Mail, 5 new">
        <svg width="27" height="23" viewBox="0 0 27 23"><path d="M1 8l9.500-6L20 8v10H1z" fill="#fff" /><path d="M3 8.500h15l-6 4.500-2-1z" fill="#111" /><circle cx="20" cy="16" r="6.300" fill="#3d3d3d" stroke="#666" strokeWidth=".6" /><text x="20" y="19.500" textAnchor="middle" fontSize="10" fill="#fff">5</text></svg>
      </TaskButton>
      <TaskButton aria-label="Store">
        <svg width="19" height="19" viewBox="0 0 19 19"><path d="M6 5V3.500Q6 1 9.500 1T13 3.500V5" fill="none" stroke="#eee" strokeWidth="1.300" /><path d="M0 5h19l-1 13H1z" fill="#fff" /><path d="M5.500 8h3.700v3.700H5.500z" fill="#f25022" /><path d="M9.800 8h3.700v3.700H9.800z" fill="#7fba00" /><path d="M5.500 12.300h3.700V16H5.500z" fill="#00a4ef" /><path d="M9.800 12.300h3.700V16H9.800z" fill="#ffb900" /></svg>
      </TaskButton>
      <TaskButton $open aria-label="Sticky Notes">
        <svg width="16" height="16" viewBox="0 0 16 16"><path d="M0 0h16v16H0z" fill="#ffe500" /><path d="M8 16V8h8z" fill="#222" /><path d="M9.500 16L16 9.500V16z" fill="#0a0a0a" /></svg>
      </TaskButton>
      <TaskButton aria-label="Android Studio">
        <svg width="17" height="19" viewBox="0 0 17 19"><circle cx="8.500" cy="8.500" r="8" fill="#7fae4c" /><circle cx="8.500" cy="7" r="4" fill="#5b7f3f" /><circle cx="8.500" cy="7" r="1.600" fill="#dfe8d4" /><path d="M7.500 9L3 18.500M9.500 9L14 18.500M5 14.500q3.500-2.500 7 0" fill="none" stroke="#e4ead9" strokeWidth="1.600" /></svg>
      </TaskButton>
      <TaskButton aria-label="Spotify">
        <svg width="20" height="20" viewBox="0 0 20 20"><circle cx="10" cy="10" r="9.700" fill="#1ed45f" /><path d="M4.200 7Q10.500 5.200 16 8.200M4.800 10.200q5.200-1.500 9.900 1M5.300 13.200q4.500-1 8.200 1" fill="none" stroke="#10331c" strokeWidth="1.600" strokeLinecap="round" /></svg>
      </TaskButton>
      <TaskButton $open aria-label="Firefox">
        <svg width="18" height="19" viewBox="0 0 18 19"><circle cx="9" cy="10" r="8.700" fill="#f5781f" /><path d="M9 1q3.500 1 6.500 4.500T17 13q-2 5-8 5.500Q15 15 13.500 9 12 4.500 9 1z" fill="#ffc928" /><circle cx="8.800" cy="9.600" r="4.600" fill="#254a9e" /><path d="M1 4q2 .5 3.500 1.500T9 6Q8 8 10 8.500q-3 3-5.500 1T3 14Q-1 9 1 4z" fill="#e6352b" /></svg>
      </TaskButton>
      <TaskButton $open $active aria-label="Chrome"><ChromeLogo s={18} /></TaskButton>
      <TaskButton $open aria-label="Paint">
        <svg width="19" height="19" viewBox="0 0 19 19"><path d="M1 11Q1 4 9 4t8 6q0 6-9 7-3 0-2-2.500T4 14q-3 .5-3-3z" fill="#c9e0ec" /><circle cx="5" cy="8.500" r="1.300" fill="#3a78c2" /><circle cx="8.500" cy="6.800" r="1.300" fill="#d1413b" /><circle cx="4.500" cy="11.500" r="1.200" fill="#52a353" /><path d="M11.500 17l1.500-9 2.500-5L17 0l1.500 1.500L15.500 9z" fill="#d19a54" /></svg>
      </TaskButton>
    </TaskGroup>
    <Tray>
      <TrayButton $w={38} aria-label="People">
        <svg width="13" height="13" viewBox="0 0 13 13" fill="none" stroke="#fff"><circle cx="4" cy="6" r="2" /><path d="M1 12.500Q1 8.500 4 8.500t3 4" /><circle cx="9" cy="2.800" r="2" /><path d="M7 6.500q1-1.300 2.300-1.200Q12 5.500 12 9" /></svg>
      </TrayButton>
      <TrayButton $w={20} aria-label="Hidden icons"><Chevron dir="up" s={11} w={0.8} /></TrayButton>
      <TrayButton aria-label="OneDrive">
        <svg width="14" height="9" viewBox="0 0 14 9"><path d="M3 8.500A2.800 2.800 0 0 1 3 3 4 4 0 0 1 9.500 2.500 3 3 0 0 1 11.500 8.500z" fill="#e8e8e8" /></svg>
      </TrayButton>
      <TrayButton aria-label="Battery">
        <svg width="13" height="7" viewBox="0 0 13 7"><path d="M.5.500h10.500v6H.5zM12 2v3" fill="none" stroke="#fff" /><path d="M1 1h7v5H1z" fill="#fff" /></svg>
      </TrayButton>
      <TrayButton aria-label="Network">
        <svg width="11" height="11" viewBox="0 0 11 11" fill="none" stroke="#bbb"><path d="M.5 10Q1 1 10.500.5M3 10.300Q3.500 4 10.500 3.500M5.500 10.500Q6 7 10.500 6.500" /><circle cx="9" cy="9.500" r="1" fill="#fff" stroke="none" /></svg>
      </TrayButton>
      <TrayButton aria-label="Volume">
        <svg width="13" height="10" viewBox="0 0 13 10" fill="none" stroke="#ddd" strokeWidth=".9"><path d="M.5 3.500h2L5 1v8L2.500 6.500h-2zM7 3.500q1 1.500 0 3M9 2q2 3 0 6M11 .8q2.500 4.200 0 8.400" /></svg>
      </TrayButton>
      <Clock>10:19 PM<br />1/26/2020</Clock>
      <IconButton $w={20} $h={22} aria-label="Notifications, 7 new">
        <svg width="21" height="21" viewBox="0 0 21 21"><path d="M0 1h14v10H6l-3 3v-3H0z" fill="#fff" /><path d="M2.500 4h9M2.500 6.300h9M2.500 8.600h5" stroke="#333" strokeWidth=".9" /><circle cx="13.500" cy="13.500" r="6" fill="#333" stroke="#888" /><text x="13.500" y="17" textAnchor="middle" fontSize="9" fill="#fff">7</text></svg>
      </IconButton>
      <TrayEdge />
    </Tray>
  </Taskbar>
);

export default function App() {
  return (
    <Screen>
      <Global />
      <BrowserTop />
      <Editor>
        <EditorView />
        <PickerModal />
      </Editor>
      <DownloadShelf />
      <TaskBar />
      <OpenWindow />
      <Highlight width="106" height="50" viewBox="0 0 106 50">
        <ellipse cx="53" cy="25" rx="49" ry="20.500" fill="none" stroke="#dc1f2a" strokeWidth="5" />
      </Highlight>
    </Screen>
  );
}
